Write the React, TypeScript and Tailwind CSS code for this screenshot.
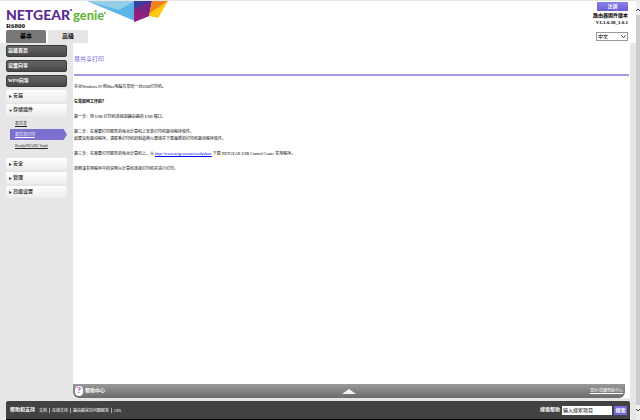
import type { ReactNode } from "react";

const Logo = () => (
  <svg className="block h-[22px] w-[180px]" viewBox="0 0 180 22" role="img" aria-label="NETGEAR genie">
    <polygon points="87,0 135,0 135,20" fill="#5bb5e6" />
    <polygon points="87,0 135,0 119,9" fill="#93cfe9" />
    <polygon points="134,0 153,0 134,12" fill="#283a90" />
    <polygon points="152,0 149,15 134,21 134,8" fill="#7a2682" />
    <polygon points="134,8 149,15 134,21" fill="#96207f" />
    <polygon points="134,0 152,0 134,8" fill="#3a3f9b" />
    <polygon points="152,0 168,0 149,15" fill="#f58220" />
    <polygon points="168,0 158,17 149,15 151,11" fill="#fdc70c" />
    <text x="6" y="19" fontSize="14" fontWeight="900" fill="#5c2d91" fontFamily="Lato, sans-serif">
      NETGEAR
    </text>
    <circle cx="71" cy="9" r="1" fill="#5c2d91" />
    <text x="73" y="19" fontSize="13" fontWeight="700" fill="#5cb531" fontFamily="Lato, sans-serif">
      genie
    </text>
    <circle cx="105" cy="12" r="1" fill="#5cb531" />
  </svg>
);

const NavButton = ({ children }: { children: ReactNode }) => (
  <button className="flex h-3 w-full items-center rounded-xs border border-[#3a3a3a] bg-linear-to-b from-[#646464] to-[#484848] pl-px text-[5px] font-bold text-white">
    {children}
  </button>
);

const NavGroup = ({ open, children }: { open?: boolean; children: ReactNode }) => (
  <button className="flex h-3 w-full items-center gap-px rounded-xs bg-linear-to-b from-white to-[#ececec] pl-[3px] text-[5px] font-medium text-[#222]">
    <svg className="size-[3px]" viewBox="0 0 4 4" aria-hidden="true">
      <polygon points={open ? "0,1 4,1 2,4" : "0,0 4,2 0,4"} fill="#444" />
    </svg>
    {children}
  </button>
);

const footerLinks = ["文档", "在线支持", "路由器常见问题解答", "GPL"];

export default function App() {
  return (
    <div
      lang="zh-CN"
      className="flex min-h-screen bg-white font-['Liberation_Serif','Noto_Sans_CJK_SC',serif] text-black"
    >
      <div className="flex min-w-0 flex-1 flex-col border-t border-[#e4e4e4]">
        <header className="flex justify-between pr-2">
          <div>
            <Logo />
            <p className="pl-[6px] text-[7px] leading-[7px] font-bold">R6800</p>
            <div className="flex gap-[2px] pl-[6px] text-[6px] font-bold">
              <button className="h-[13px] w-10 rounded-t-xs bg-[#777]">基本</button>
              <button className="h-[13px] w-10 rounded-t-xs bg-[#e6e6e6]">高级</button>
            </div>
          </div>
          <div className="flex flex-col items-end pt-px">
            <button className="h-[9px] w-[31px] bg-linear-to-b from-[#8a80ea] to-[#6a5fd8] text-[5px] leading-[9px] font-bold text-white">
              注销
            </button>
            <p className="pt-px text-right text-[5px] leading-[7px] font-bold">
              路由器固件版本
              <br />
              V1.1.0.38_1.0.1
            </p>
            <div className="relative mt-[6px]">
              <select
                aria-label="语言"
                className="block h-[9px] w-8 appearance-none border border-[#999] bg-white pl-px text-[5px] leading-[7px]"
              >
                <option>中文</option>
              </select>
              <svg
                className="pointer-events-none absolute top-[3px] right-[2px] h-[3px] w-[5px]"
                viewBox="0 0 10 6"
                aria-hidden="true"
              >
                <path d="M1 1L5 5L9 1" fill="none" stroke="#222" strokeWidth="2" />
              </svg>
            </div>
          </div>
        </header>

        <div className="flex flex-1 bg-[#e6e6e6] pr-[6px]">
          <nav className="flex w-[73px] flex-col gap-[3px] px-[6px] pt-[2px]">
            <NavButton>高级首页</NavButton>
            <NavButton>设置向导</NavButton>
            <NavButton>WPS向导</NavButton>
            <div className="flex flex-col gap-[2px]">
              <NavGroup>安装</NavGroup>
              <NavGroup open>存储组件</NavGroup>
              <div className="flex h-[38px] flex-col text-[4px] leading-[11px] text-[#222] underline">
                <a href="#share" className="pl-[9px]">
                  易共享
                </a>
                <a
                  href="#print"
                  className="ml-1 bg-[#7b6fd0] pl-[5px] text-white [clip-path:polygon(0_0,94%_0,100%_50%,94%_100%,0_100%)]"
                >
                  易共享打印
                </a>
                <a href="#vault" className="pl-[9px]">
                  ReadySHARE Vault
                </a>
              </div>
              <NavGroup>安全</NavGroup>
              <NavGroup>管理</NavGroup>
              <NavGroup>高级设置</NavGroup>
            </div>
          </nav>

          <div className="flex min-w-0 flex-1 flex-col">
            <main className="flex-1 bg-white pt-[10px] pl-px text-[4px] leading-[7px]">
              <h1 className="text-[6px] leading-3 text-[#7468dc]">易共享打印</h1>
              <hr className="mt-[9px] mr-px border-t-2 border-[#a09ae0]" />
              <p className="pt-[7px]">多台Windows PC和Mac电脑共享同一台USB打印机。</p>
              <p className="pt-2 font-bold">它是如何工作的？</p>
              <p className="pt-2">第一步：将 USB 打印机连接到路由器的 USB 端口。</p>
              <p className="pt-2">
                第二步：在需要打印服务的每台计算机上安装打印机驱动程序软件。
                <br />
                如果没有驱动程序，请联系打印机的制造商以查找并下载最新的打印机驱动程序软件。
              </p>
              <p className="pt-2">
                第三步：在需要打印服务的每台计算机上，从{" "}
                <a href="http://www.netgear.com/readyshare" className="text-[#0000ee] underline">
                  http://www.netgear.com/readyshare
                </a>{" "}
                下载 NETGEAR USB Control Center 实用程序。
              </p>
              <p className="pt-2">按照该实用程序中的说明从计算机连接打印机并进行打印。</p>
            </main>
            <div className="bg-white pr-[5px]">
              <div className="grid h-[14px] grid-cols-3 items-center rounded-b-md bg-linear-to-b from-[#999] to-[#6c6c6c] px-[2px] text-[5px] text-white">
                <a href="#help" className="flex items-center gap-[2px] font-bold">
                  <span className="flex h-[10px] w-2 items-center justify-center rounded-full bg-white text-[8px] text-[#b03fc0]">
                    ?
                  </span>
                  帮助中心
                </a>
                <svg className="h-[5px] w-[14px] justify-self-center" viewBox="0 0 14 5" aria-hidden="true">
                  <polygon points="7,0 14,5 0,5" fill="#f4f4f4" />
                </svg>
                <a href="#toggle" className="justify-self-end text-[4px] underline">
                  显示/隐藏帮助中心
                </a>
              </div>
            </div>
          </div>
        </div>

        <div className="bg-[#e6e6e6] pt-[3px] pr-[6px] pl-[6px]">
          <footer className="flex h-[19px] items-center justify-between rounded-t-xs border-b border-black bg-[#424242] pr-[3px] pl-1 text-white">
            <div className="flex items-center gap-[2px]">
              <strong className="text-[5px]">帮助和支持</strong>
              <nav className="flex divide-x divide-[#aaa] text-[4px] leading-[5px]">
                {footerLinks.map((label) => (
                  <a key={label} href="#support" className="px-[2px]">
                    {label}
                  </a>
                ))}
              </nav>
            </div>
            <form className="flex items-center gap-[2px]">
              <label htmlFor="search" className="text-[5px] font-bold">
                搜索帮助
              </label>
              <input
                id="search"
                defaultValue="输入搜索项目"
                className="h-[9px] w-[50px] bg-white px-px text-[5px] leading-[9px] text-black"
              />
              <button type="button" className="h-[9px] w-[13px] bg-[#7468dc] text-[5px] leading-[9px] font-bold">
                搜索
              </button>
            </form>
          </footer>
        </div>
      </div>

      <div className="flex w-1 flex-col items-center justify-between bg-[#f0f0f0] py-2" aria-hidden="true">
        <svg className="h-[3px] w-1" viewBox="0 0 4 3">
          <path d="M0 3L2 1L4 3" fill="none" stroke="#444" />
        </svg>
        <div className="my-1 w-full flex-1 bg-[#cdcdcd]" />
        <svg className="h-[3px] w-1" viewBox="0 0 4 3">
          <path d="M0 0L2 2L4 0" fill="none" stroke="#444" />
        </svg>
      </div>
    </div>
  );
}
